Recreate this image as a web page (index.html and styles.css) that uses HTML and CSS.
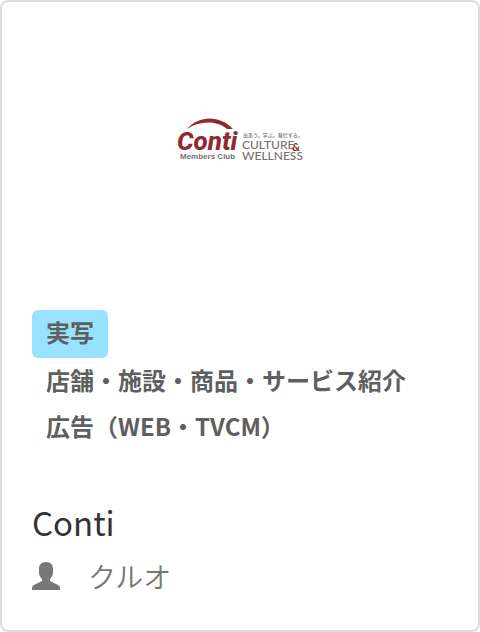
FILE: index.html
```html
<!DOCTYPE html>
<html lang="ja">
<head>
<meta charset="utf-8">
<meta name="viewport" content="width=device-width, initial-scale=1">
<title>Conti</title>
<link rel="stylesheet" href="styles.css">
</head>
<body>
<article class="card">
  <div class="thumb">
    <svg class="logo" viewBox="0 0 126 46" role="img" aria-label="Conti Members Club">
      <path class="red" d="M10 12 C22 -2 43 -2 56 12 L50 12 C41 4 24 3 10 12 Z"/>
      <text class="red brand" x="0" y="33">Conti</text>
      <text class="grey club" x="3" y="42">Members Club</text>
      <text class="grey motto" x="66" y="20">出あう。学ぶ。発信する。</text>
      <text class="grey words" x="65" y="32">CULTURE</text>
      <text class="red amp" x="115" y="34">&amp;</text>
      <text class="grey words" x="65" y="43">WELLNESS</text>
    </svg>
  </div>
  <ul class="tags">
    <li class="tag tag-main">実写</li>
    <li class="tag">店舗・施設・商品・サービス紹介</li>
    <li class="tag">広告（WEB・TVCM）</li>
  </ul>
  <h2 class="title">Conti</h2>
  <p class="author">
    <svg class="person" viewBox="0 0 28 28" aria-hidden="true">
      <path d="M14 0 C9 0 7 3 7 7 V10 C7 13 8 15 10 17 V19 L2 23 C0 24 0 25 0 28 H28 C28 25 28 24 26 23 L18 19 V17 C20 15 21 13 21 10 V7 C21 3 19 0 14 0 Z"/>
    </svg>
    <span>クルオ</span>
  </p>
</article>
</body>
</html>
```
FILE: styles.css
```css
* {
  box-sizing: border-box;
}

body {
  margin: 0;
  background: #fff;
  font-family: "Noto Sans CJK JP", sans-serif;
}

.card {
  min-height: 100vh;
  padding: 0 30px 24px;
  border: 2px solid #dcdcdc;
  border-radius: 8px;
  background: #fff;
}

.thumb {
  display: flex;
  align-items: center;
  justify-content: center;
  height: 276px;
}

.logo {
  width: 126px;
  height: 46px;
}

.red {
  fill: #8e2a32;
}

.grey {
  fill: #77706f;
}

.brand {
  font: italic 800 26px Roboto, sans-serif;
}

.club {
  font: bold 8px "Liberation Sans", sans-serif;
}

.motto {
  font: 500 5px "Noto Sans CJK JP", sans-serif;
}

.words {
  font: 500 12px Lato, sans-serif;
}

.amp {
  font: bold 11px Lato, sans-serif;
}

.tags {
  display: flex;
  flex-direction: column;
  align-items: flex-start;
  margin: 32px 0 0;
  padding: 0;
  list-style: none;
}

.tag {
  padding: 0 14px 2px;
  border-radius: 6px;
  color: #5f5f5f;
  font-size: 24px;
  font-weight: 700;
  line-height: 44px;
}

.tag-main {
  padding-bottom: 4px;
  background: #99e2ff;
}

.title {
  margin: 46px 0 0;
  color: #333;
  font-size: 33px;
  font-weight: 400;
  line-height: 52px;
}

.author {
  display: flex;
  align-items: center;
  gap: 28px;
  margin: 0;
  color: #777;
  font-size: 28px;
  font-weight: 350;
  line-height: 56px;
}

.person {
  width: 28px;
  height: 28px;
  fill: #777;
}
```
